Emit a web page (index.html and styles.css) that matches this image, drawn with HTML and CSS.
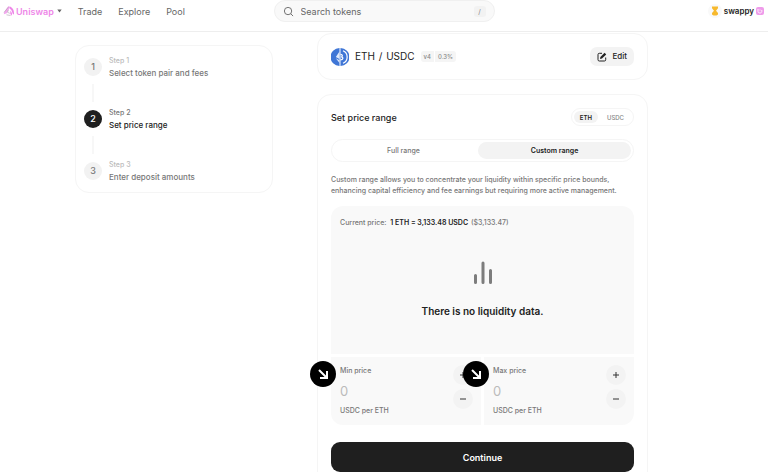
FILE: index.html
```html
<!DOCTYPE html>
<html lang="en">
<head>
    <meta charset="UTF-8">
    <meta name="viewport" content="width=device-width, initial-scale=1.0">
    <title>Uniswap - New position</title>
    <link rel="stylesheet" href="styles.css">
</head>
<body>
    <header class="header">
        <nav class="nav">
            <a href="#" class="brand">
                <svg class="brand-logo" viewBox="0 0 12 12" aria-hidden="true">
                    <path d="M5.500 1 7 2.200 3.800 8.200 .8 9.300Q.8 7 2.500 5z" fill="#f3a6ef"/>
                    <path d="M6.500 1.500C9.500 2 11.500 5.500 11 9.500L9.900 9 8.300 5 6.800 3.800z" fill="#ee86e8"/>
                    <path d="M7.300 5.500 9 8.300 8.700 10.800 7.300 9z" fill="#ee86e8"/>
                    <path d="M1 7.500 5.500 2M3.500 9.800 7.500 10.500M5.300 5 4.500 7.300 6.800 8.300" stroke="#b9aab8" stroke-width=".7" fill="none"/>
                </svg>
                Uniswap
                <svg class="caret" viewBox="0 0 5 4" aria-hidden="true"><path d="M.3.500h4.400L2.500 3.500z" fill="#666"/></svg>
            </a>
            <a href="#">Trade</a>
            <a href="#">Explore</a>
            <a href="#">Pool</a>
        </nav>
        <label class="search">
            <svg viewBox="0 0 12 12" aria-hidden="true"><circle cx="5.500" cy="5.500" r="4" /><path d="M8.500 8.500 11 11"/></svg>
            <input type="text" placeholder="Search tokens" aria-label="Search tokens">
            <kbd>/</kbd>
        </label>
        <a href="#" class="account">
            <span class="avatar">
                <svg viewBox="0 0 8 10" aria-hidden="true"><path d="M1 .5h6v1.800L5 4.700 7 7v1.500L5.500 9.500h-3L1 8.500V7l2-2.300L1 2.300z" fill="#f7b92d"/></svg>
            </span>
            swappy
            <svg class="tag" viewBox="0 0 8 8" aria-hidden="true"><rect width="8" height="8" rx="2" fill="#ef9bea"/><path d="M2 2v2.500c0 2 3.800 2 3.800 0V3M4 2.500v1" stroke="#fff" stroke-width=".9" fill="none"/></svg>
        </a>
    </header>

    <main class="main">
        <ol class="steps">
            <li class="step">
                <span class="step-number">1</span>
                <div><p class="step-label">Step 1</p><p class="step-title">Select token pair and fees</p></div>
            </li>
            <li class="step active">
                <span class="step-number">2</span>
                <div><p class="step-label">Step 2</p><p class="step-title">Set price range</p></div>
            </li>
            <li class="step">
                <span class="step-number">3</span>
                <div><p class="step-label">Step 3</p><p class="step-title">Enter deposit amounts</p></div>
            </li>
        </ol>

        <div class="content">
            <section class="card pair">
                <svg class="pair-logo" viewBox="0 0 18 18" aria-hidden="true">
                    <path d="M8.500 0a9 9 0 0 0 0 18zM9.500 0a9 9 0 0 1 0 18z" fill="#3f76d6"/>
                    <path d="M8.500 3.500 4.800 9l3.700 2zM8.500 12.200 4.800 10.200 8.500 15z" fill="#dfe9fb"/>
                    <path d="M12 2.800a6.700 6.700 0 0 1 0 12.400M9.500 6.300c2.300 0 2.300 2.200.8 2.500 2.300.4 2.100 3-.8 3" stroke="#fff" stroke-width="1.200" fill="none"/>
                </svg>
                <h1 class="pair-name">ETH <span>/</span> USDC</h1>
                <div class="chips"><span>v4</span><span>0.3%</span></div>
                <button type="button" class="edit">
                    <svg viewBox="0 0 10 10" aria-hidden="true">
                        <path d="M5 1.300H2.300Q1 1.300 1 2.600v5.100Q1 9 2.300 9h5.100Q8.700 9 8.700 7.700V5.500" stroke="#222" stroke-width="1" fill="none"/>
                        <path d="M3 7.100 3.400 5 7.600.8 9.200 2.400 5 6.600z" fill="#222"/>
                    </svg>
                    Edit
                </button>
            </section>

            <section class="card range">
                <div class="range-header">
                    <h2>Set price range</h2>
                    <div class="toggle">
                        <button type="button" class="selected">ETH</button>
                        <button type="button">USDC</button>
                    </div>
                </div>
                <div class="tabs">
                    <button type="button">Full range</button>
                    <button type="button" class="selected">Custom range</button>
                </div>
                <p class="hint">Custom range allows you to concentrate your liquidity within specific price bounds, enhancing capital efficiency and fee earnings but requiring more active management.</p>

                <div class="chart">
                    <p class="current">Current price: <strong>1 ETH = 3,133.48 USDC</strong> ($3,133.47)</p>
                    <div class="empty">
                        <svg viewBox="0 0 20 24" aria-hidden="true"><path d="M2.500 14.500v7M10 2v19.500M17.500 9.500v12"/></svg>
                        <p>There is no liquidity data.</p>
                    </div>
                </div>

                <div class="prices">
                    <div class="price">
                        <div class="price-field">
                            <label for="min-price">Min price</label>
                            <input id="min-price" type="text" placeholder="0">
                            <p>USDC per ETH</p>
                        </div>
                        <div class="stepper">
                            <button type="button" aria-label="Increase min price"><svg viewBox="0 0 8 8"><path d="M1 4h6M4 1v6"/></svg></button>
                            <button type="button" aria-label="Decrease min price"><svg viewBox="0 0 8 8"><path d="M1 4h6"/></svg></button>
                        </div>
                        <span class="pointer"><svg viewBox="0 0 12 12"><path d="M2 2 9.500 9.500M10 3v7H3"/></svg></span>
                    </div>
                    <div class="price">
                        <div class="price-field">
                            <label for="max-price">Max price</label>
                            <input id="max-price" type="text" placeholder="0">
                            <p>USDC per ETH</p>
                        </div>
                        <div class="stepper">
                            <button type="button" aria-label="Increase max price"><svg viewBox="0 0 8 8"><path d="M1 4h6M4 1v6"/></svg></button>
                            <button type="button" aria-label="Decrease max price"><svg viewBox="0 0 8 8"><path d="M1 4h6"/></svg></button>
                        </div>
                        <span class="pointer"><svg viewBox="0 0 12 12"><path d="M2 2 9.500 9.500M10 3v7H3"/></svg></span>
                    </div>
                </div>

                <button type="button" class="continue">Continue</button>
            </section>
        </div>
    </main>
</body>
</html>
```
FILE: styles.css
```css
* {
    box-sizing: border-box;
}

/* the page scrolls without a visible bar */
html {
    scrollbar-width: none;
}

body {
    margin: 0;
    background-color: #fff;
    color: #222;
    font-family: Inter, "Liberation Sans", sans-serif;
    font-size: 8px;
    line-height: 11px;
}

h1, h2, p, ol {
    margin: 0;
    padding: 0;
    font-weight: inherit;
}

a {
    color: inherit;
    text-decoration: none;
}

button, input {
    border: 0;
    padding: 0;
    background: none;
    color: inherit;
    font: inherit;
}

svg {
    display: block;
    flex: none;
}

/* Header */

.header {
    display: grid;
    grid-template-columns: 1fr 221px 1fr;
    align-items: start;
    height: 32px;
    border-bottom: 1px solid #eee;
}

.nav {
    display: flex;
    align-items: center;
    gap: 16px;
    height: 22px;
    padding-left: 3px;
    color: #666;
    font-size: 9px;
}

.brand {
    display: flex;
    align-items: center;
    gap: 1px;
    color: #ee86e8;
    font-weight: 600;
}

.brand-logo {
    width: 12px;
    height: 12px;
}

.caret {
    width: 5px;
    height: 4px;
    margin-left: 2px;
}

.search {
    display: flex;
    align-items: center;
    gap: 7px;
    height: 22px;
    padding: 0 8px;
    border: 1px solid #f0f0f0;
    border-radius: 11px;
    background-color: #f9f9f9;
}

.search svg {
    width: 11px;
    height: 11px;
    fill: none;
    stroke: #666;
}

.search input {
    flex: 1;
    min-width: 0;
    font-size: 9px;
}

.search input::placeholder {
    color: #666;
}

.search kbd {
    width: 12px;
    border-radius: 3px;
    background-color: #f2f2f2;
    color: #888;
    font: inherit;
    font-size: 7px;
    text-align: center;
}

.account {
    display: flex;
    align-items: center;
    justify-content: flex-end;
    gap: 2px;
    height: 22px;
    padding-right: 4px;
    font-weight: 600;
}

.avatar {
    display: grid;
    place-items: center;
    width: 14px;
    height: 14px;
    border-radius: 50%;
    background-color: #f9f9f9;
}

.avatar svg {
    width: 8px;
    height: 10px;
}

.tag {
    width: 8px;
    height: 8px;
}

/* Page */

.main {
    display: grid;
    grid-template-columns: 198px 1fr;
    gap: 44px;
    align-items: start;
    padding: 1px 120px 24px 75px;
    font-weight: 500;
}

.steps {
    margin-top: 12px;
    padding: 8px;
    border: 1px solid #f5f5f5;
    border-radius: 14px;
    list-style: none;
}

.step {
    position: relative;
    display: flex;
    align-items: center;
    gap: 7px;
    height: 26px;
    color: #777;
    line-height: 13px;
}

.step + .step {
    margin-top: 26px;
}

/* connector between two steps */
.step + .step::before {
    content: "";
    position: absolute;
    left: 8px;
    top: -22px;
    width: 2px;
    height: 18px;
    background-color: #f7f7f7;
}

.step-number {
    width: 18px;
    border-radius: 50%;
    background-color: #f2f2f2;
    font-size: 9px;
    line-height: 18px;
    text-align: center;
}

.step-label {
    color: #bbb;
    font-size: 7px;
}

.active .step-number {
    background-color: #1f1f1f;
    color: #fff;
}

.active .step-label {
    color: #777;
}

.active .step-title {
    color: #222;
}

.content {
    display: grid;
    gap: 14px;
}

.card {
    padding: 13px;
    border: 1px solid #f5f5f5;
    border-radius: 14px;
}

.pair {
    display: flex;
    align-items: center;
    gap: 6px;
}

.pair-logo {
    width: 18px;
    height: 18px;
}

.pair-name {
    font-size: 10px;
    font-weight: 400;
}

.pair-name span {
    margin: 0 1px;
}

.chips {
    display: flex;
    gap: 1px;
    color: #888;
    font-size: 6px;
}

.chips span {
    padding: 0 3px;
    background-color: #f5f5f5;
}

.chips span:first-child {
    border-radius: 3px 0 0 3px;
}

.chips span:last-child {
    border-radius: 0 3px 3px 0;
}

.edit {
    display: flex;
    align-items: center;
    gap: 5px;
    height: 19px;
    margin-left: auto;
    padding: 0 7px;
    border-radius: 7px;
    background-color: #f3f3f3;
}

.edit svg {
    width: 10px;
    height: 10px;
}

.range-header {
    display: flex;
    align-items: center;
    justify-content: space-between;
}

.range-header h2 {
    font-size: 9px;
}

.toggle {
    display: flex;
    height: 18px;
    padding: 2px;
    border: 1px solid #f5f5f5;
    border-radius: 9px;
    color: #888;
    font-size: 6px;
}

.toggle button {
    padding: 0 7px 0 9px;
    border-radius: 7px;
}

.toggle .selected {
    padding: 0 6px;
}

.tabs {
    display: grid;
    grid-template-columns: 10fr 11fr;
    gap: 5px;
    height: 23px;
    margin-top: 13px;
    padding: 2px;
    border: 1px solid #f5f5f5;
    border-radius: 12px;
    color: #777;
    font-size: 7px;
}

.tabs button {
    border-radius: 9px;
}

.toggle .selected,
.tabs .selected {
    background-color: #f3f3f3;
    color: #222;
    font-weight: 600;
}

.hint {
    margin: 12px 0 10px;
    color: #777;
    font-size: 7px;
}

.chart {
    height: 148px;
    padding: 11px 9px;
    border-radius: 12px 12px 0 0;
    background-color: #f9f9f9;
}

.current {
    color: #777;
    font-size: 7px;
}

.current strong {
    margin: 0 1px 0 2px;
    color: #222;
    font-weight: 600;
}

.empty {
    display: grid;
    justify-items: center;
    gap: 21px;
    margin-top: 33px;
    font-size: 10px;
}

.empty p {
    font-weight: 600;
}

.empty svg {
    width: 20px;
    height: 24px;
    stroke: #7d7d7d;
    stroke-width: 3;
    stroke-linecap: round;
}

.prices {
    display: grid;
    grid-template-columns: 1fr 1fr;
    gap: 3px;
    margin: 3px 0 17px;
}

.price {
    position: relative;
    display: flex;
    justify-content: space-between;
    padding: 8px 8px 9px 9px;
    background-color: #f9f9f9;
    color: #777;
    font-size: 7px;
}

.price:first-child {
    border-radius: 0 0 0 12px;
}

.price:last-child {
    border-radius: 0 0 12px 0;
}

.price-field {
    display: grid;
    gap: 5px;
}

.price-field input {
    width: 90px;
    height: 19px;
    font-size: 13px;
    font-weight: 400;
}

.price-field input::placeholder {
    color: #bbb;
}

.stepper {
    display: grid;
    gap: 4px;
    align-content: start;
}

.stepper button {
    display: grid;
    place-items: center;
    width: 20px;
    height: 20px;
    border-radius: 50%;
    background-color: #f3f3f3;
}

.stepper svg {
    width: 8px;
    height: 8px;
    stroke: #333;
}

.pointer {
    position: absolute;
    left: -21px;
    top: 4px;
    display: grid;
    place-items: center;
    width: 26px;
    height: 26px;
    border-radius: 50%;
    background-color: #000;
}

.pointer svg {
    width: 12px;
    height: 12px;
    fill: none;
    stroke: #fff;
    stroke-width: 2;
}

.continue {
    width: 100%;
    height: 30px;
    border-radius: 9px;
    background-color: #1f1f1f;
    color: #fff;
    font-size: 9px;
    font-weight: 600;
}
```
